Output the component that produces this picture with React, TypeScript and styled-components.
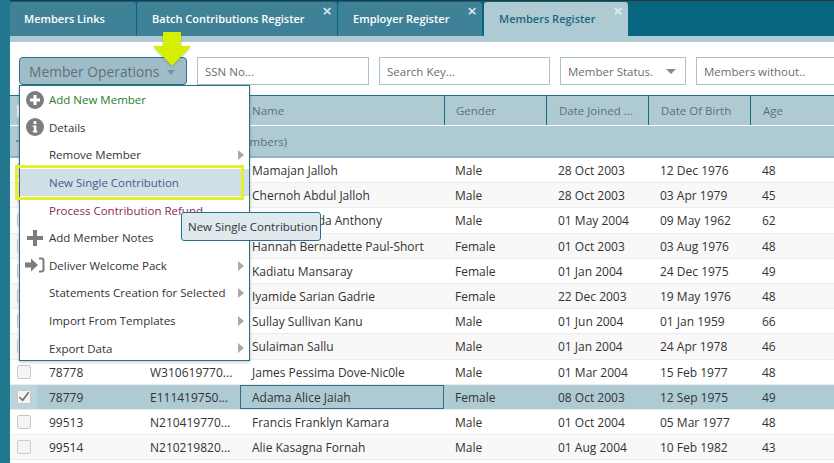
import React from "react";
import styled, { createGlobalStyle } from "styled-components";

const GlobalStyle = createGlobalStyle`
	html, body {
		margin: 0;
		padding: 0;
		background: #fff;
	}
	* {
		box-sizing: border-box;
	}
`;

const tabs = [
	{ label: "Members Links", width: 126, closable: false, active: false },
	{ label: "Batch Contributions Register", width: 200, closable: true, active: false },
	{ label: "Employer Register", width: 144, closable: true, active: false },
	{ label: "Members Register", width: 144, closable: true, active: true },
];

const columns = "27px 101px 102px 204px 102px 102px 102px 84px";

const rows = [
	{ id: "", ssn: "", name: "Mamajan Jalloh", gender: "Male", joined: "28 Oct 2003", birth: "12 Dec 1976", age: "48" },
	{ id: "", ssn: "", name: "Chernoh Abdul Jalloh", gender: "Male", joined: "28 Oct 2003", birth: "03 Apr 1979", age: "45" },
	{ id: "", ssn: "", name: "Fatmata Linda Anthony", gender: "Male", joined: "01 May 2004", birth: "09 May 1962", age: "62" },
	{ id: "", ssn: "", name: "Hannah Bernadette Paul-Short", gender: "Female", joined: "01 Oct 2003", birth: "03 Aug 1976", age: "48" },
	{ id: "", ssn: "", name: "Kadiatu Mansaray", gender: "Female", joined: "01 Jan 2004", birth: "24 Dec 1975", age: "49" },
	{ id: "", ssn: "", name: "Iyamide Sarian Gadrie", gender: "Female", joined: "22 Dec 2003", birth: "19 May 1976", age: "48" },
	{ id: "", ssn: "", name: "Sullay Sullivan Kanu", gender: "Male", joined: "01 Jun 2004", birth: "01 Jan 1959", age: "66" },
	{ id: "", ssn: "", name: "Sulaiman Sallu", gender: "Male", joined: "01 Jan 2004", birth: "24 Apr 1978", age: "46" },
	{ id: "78778", ssn: "W310619770...", name: "James Pessima Dove-Nic0le", gender: "Male", joined: "01 Mar 2004", birth: "15 Feb 1977", age: "48" },
	{ id: "78779", ssn: "E111419750...", name: "Adama Alice Jaiah", gender: "Female", joined: "08 Oct 2003", birth: "12 Sep 1975", age: "49", selected: true },
	{ id: "99513", ssn: "N210419770...", name: "Francis Franklyn Kamara", gender: "Male", joined: "01 Oct 2004", birth: "05 Mar 1977", age: "48" },
	{ id: "99514", ssn: "N210219820...", name: "Alie Kasagna Fornah", gender: "Male", joined: "01 Aug 2004", birth: "10 Feb 1982", age: "43" },
];

const PlusCircleIcon = () => (
	<svg width="18" height="18" viewBox="0 0 18 18">
		<circle cx="9" cy="9" r="9" fill="#7d7d7f" />
		<path d="M9 4v10M4 9h10" stroke="#fff" strokeWidth="3" />
	</svg>
);

const InfoIcon = () => (
	<svg width="18" height="18" viewBox="0 0 18 18">
		<circle cx="9" cy="9" r="9" fill="#7d7d7f" />
		<rect x="7.6" y="3.2" width="2.8" height="2.8" fill="#fff" />
		<path d="M6.8 7.4h3.6v5.4h1v1.6H6.8v-1.6h1v-3.8h-1z" fill="#fff" />
	</svg>
);

const PlusIcon = () => (
	<svg width="18" height="18" viewBox="0 0 18 18">
		<path d="M9 1v16M1 9h16" stroke="#7d7d7f" strokeWidth="4" />
	</svg>
);

const SignInIcon = () => (
	<svg width="20" height="16" viewBox="0 0 20 16">
		<path d="M0 5.5h6V1.5L13 8l-7 6.5v-4H0z" fill="#7d7d7f" />
		<path d="M14 1.5h2.5a2 2 0 0 1 2 2v9a2 2 0 0 1-2 2H14" fill="none" stroke="#7d7d7f" strokeWidth="2" />
	</svg>
);

const CheckIcon = () => (
	<svg width="18" height="16" viewBox="0 0 18 16">
		<path d="M2 8l5 5 9-12" fill="none" stroke="#6f6f6f" strokeWidth="2.4" />
	</svg>
);

const menuItems = [
	{ label: "Add New Member", icon: <PlusCircleIcon />, tone: "#2a7d2a" },
	{ label: "Details", icon: <InfoIcon />, tone: "#333" },
	{ label: "Remove Member", sub: true, tone: "#333" },
	{ label: "New Single Contribution", tone: "#4a5a93", hovered: true },
	{ label: "Process Contribution Refund", tone: "#8e2a4e" },
	{ label: "Add Member Notes", icon: <PlusIcon />, tone: "#333" },
	{ label: "Deliver Welcome Pack", icon: <SignInIcon />, sub: true, tone: "#333" },
	{ label: "Statements Creation for Selected", sub: true, tone: "#333" },
	{ label: "Import From Templates", sub: true, tone: "#333" },
	{ label: "Export Data", sub: true, tone: "#333" },
];

export default function App() {
	return (
		<Page>
			<GlobalStyle />
			<TabBar>
				{tabs.map((tab) => (
					<Tab key={tab.label} $width={tab.width} $active={tab.active}>
						{tab.label}
						{tab.closable && <TabClose $active={tab.active}>×</TabClose>}
					</Tab>
				))}
			</TabBar>
			<Strip />
			<Toolbar>
				<OperationsButton>
					Member Operations
					<SmallCaret />
				</OperationsButton>
				<Field $width={172}>SSN No...</Field>
				<Field $width={171}>Search Key...</Field>
				<Field $width={126}>
					Member Status.
					<DropCaret />
				</Field>
				<Field $width={160}>Members without..</Field>
			</Toolbar>
			<HeaderRow>
				<HeaderCell>
					<CheckBox />
				</HeaderCell>
				<HeaderCell />
				<HeaderCell />
				<HeaderCell>Name</HeaderCell>
				<HeaderCell>Gender</HeaderCell>
				<HeaderCell>Date Joined ...</HeaderCell>
				<HeaderCell>Date Of Birth</HeaderCell>
				<HeaderCell>Age</HeaderCell>
			</HeaderRow>
			<GroupRow>
				<GroupToggle />
				Member Status: Active (1024 Members)
			</GroupRow>
			{rows.map((row, index) => (
				<Row key={row.name} $selected={row.selected} $odd={index % 2 === 1}>
					<CheckCell $selected={row.selected}>
						<CheckBox>{row.selected && <CheckIcon />}</CheckBox>
					</CheckCell>
					<Cell>{row.id}</Cell>
					<Cell>{row.ssn}</Cell>
					<Cell $focused={row.selected}>{row.name}</Cell>
					<Cell>{row.gender}</Cell>
					<Cell>{row.joined}</Cell>
					<Cell>{row.birth}</Cell>
					<Cell>{row.age}</Cell>
				</Row>
			))}

			<Menu>
				{menuItems.map((item) => (
					<MenuItem key={item.label} $tone={item.tone} $hovered={item.hovered}>
						<MenuIcon>{item.icon}</MenuIcon>
						{item.label}
						{item.sub && <SubArrow />}
					</MenuItem>
				))}
			</Menu>
			<Tooltip>New Single Contribution</Tooltip>
			<Highlight />
			<Pointer viewBox="0 0 38 34">
				<path d="M10 0h18v14h10L19 34 0 14h10z" fill="#d6ee00" />
			</Pointer>
		</Page>
	);
}

const Page = styled.div`
	position: relative;
	width: 834px;
	height: 463px;
	overflow: hidden;
	background: #fff;
	border-left: 10px solid #22788f;
	font-family: "Open Sans", "Noto Sans", sans-serif;
	font-size: 12px;
	color: #333;
`;
const TabBar = styled.div`
	display: flex;
	gap: 1px;
	height: 36px;
	margin-left: -10px;
	padding: 1px 0 0 10px;
	background: #08657f;
	border-top: 1px solid #2b3538;
`;
const Tab = styled.div<{ $width: number; $active: boolean }>`
	position: relative;
	display: flex;
	align-items: center;
	width: ${({ $width }) => $width}px;
	padding: 0 15px 1px;
	border-radius: 3px 3px 0 0;
	background: ${({ $active }) => ($active ? "#aecbd4" : "#3f8298")};
	color: ${({ $active }) => ($active ? "#1c667f" : "#fff")};
	font-weight: 600;
	font-size: 11px;
	white-space: nowrap;
	&:first-child {
		padding-left: 14px;
	}
	&:last-child {
		margin-left: 1px;
	}
`;
const TabClose = styled.span<{ $active: boolean }>`
	position: absolute;
	top: 0;
	right: 5px;
	color: ${({ $active }) => ($active ? "#e4eef1" : "#dfeaee")};
	font-size: 17px;
	line-height: 17px;
	font-weight: 600;
`;
const Strip = styled.div`
	height: 6px;
	background: #aecbd4;
`;
const Toolbar = styled.div`
	display: flex;
	gap: 10px;
	height: 54px;
	padding: 15px 0 0 9px;
	overflow: hidden;
	border-bottom: 1px solid #22708a;
`;
const OperationsButton = styled.div`
	position: relative;
	display: flex;
	align-items: center;
	flex: none;
	width: 168px;
	height: 28px;
	padding-left: 9px;
	border: 1px solid #2a7087;
	border-radius: 4px;
	background: #9fbdc8;
	color: #5f6f76;
	font-size: 13.8px;
`;
const SmallCaret = styled.span`
	position: absolute;
	right: 11px;
	top: 12px;
	border-left: 4px solid transparent;
	border-right: 4px solid transparent;
	border-top: 5px solid #7d8f96;
`;
const Field = styled.div<{ $width: number }>`
	position: relative;
	display: flex;
	align-items: center;
	flex: none;
	width: ${({ $width }) => $width}px;
	height: 28px;
	padding-left: 7px;
	border: 1px solid #a9c3cc;
	background: #fff;
	color: #6d6d6d;
	font-size: 11.5px;
`;
const DropCaret = styled.span`
	position: absolute;
	right: 9px;
	top: 11px;
	border-left: 5px solid transparent;
	border-right: 5px solid transparent;
	border-top: 5px solid #8a8a8a;
`;
const HeaderRow = styled.div`
	display: grid;
	grid-template-columns: ${columns};
	height: 30px;
	background: #aecbd4;
	border-bottom: 1px solid #fff;
`;
const HeaderCell = styled.div`
	display: flex;
	align-items: center;
	padding-left: 12px;
	border-left: 1px solid #1f6a83;
	color: #5f6f76;
	font-size: 11.5px;
	&:nth-child(-n + 4) {
		border-left: none;
	}
	&:first-child {
		padding-left: 6px;
	}
	&:nth-child(5) {
		padding-left: 11px;
	}
`;
const GroupRow = styled.div`
	display: flex;
	align-items: center;
	height: 32px;
	padding-left: 6px;
	background: #aecbd4;
	border-bottom: 2px solid #8fb3bf;
	color: #5f6f76;
	font-size: 11.5px;
`;
const GroupToggle = styled.span`
	flex: none;
	width: 8px;
	height: 2px;
	margin-right: 53px;
	background: #7d8f96;
`;
const Row = styled.div<{ $selected?: boolean; $odd: boolean }>`
	display: grid;
	grid-template-columns: ${columns};
	height: 25.2px;
	background: ${({ $selected, $odd }) => ($selected ? "#aecbd4" : $odd ? "#f8f8f8" : "#fff")};
	border-bottom: 1px solid #ececec;
`;
const Cell = styled.div<{ $focused?: boolean }>`
	display: flex;
	align-items: center;
	padding-top: 1px;
	padding-left: ${({ $focused }) => ($focused ? "11px" : "12px")};
	white-space: nowrap;
	overflow: hidden;
	border: ${({ $focused }) => ($focused ? "1px solid #2a7087" : "none")};
	&:nth-child(5) {
		padding-left: 11px;
	}
`;
const CheckCell = styled.div<{ $selected?: boolean }>`
	display: flex;
	align-items: center;
	justify-content: center;
	background: ${({ $selected }) => ($selected ? "#bcd4dc" : "transparent")};
`;
const CheckBox = styled.div`
	position: relative;
	display: flex;
	align-items: center;
	justify-content: center;
	width: 14px;
	height: 14px;
	border: 1px solid #c8c8c8;
	border-radius: 2px;
	background: #f4f4f4;
`;
const Menu = styled.div`
	position: absolute;
	left: 9px;
	top: 85px;
	width: 231px;
	height: 276px;
	background: #fff;
	border: 1px solid #2a6f85;
	box-shadow: 0 1px 3px rgba(0, 0, 0, 0.25);
`;
const MenuItem = styled.div<{ $tone: string; $hovered?: boolean }>`
	position: relative;
	display: flex;
	align-items: center;
	height: 27.6px;
	background: ${({ $hovered }) => ($hovered ? "#d0e0e6" : "transparent")};
	color: ${({ $tone }) => $tone};
	font-size: 11.5px;
	white-space: nowrap;
`;
const MenuIcon = styled.span`
	display: flex;
	align-items: center;
	justify-content: center;
	flex: none;
	width: 29px;
	padding-left: 1px;
`;
const SubArrow = styled.span`
	position: absolute;
	right: 5px;
	top: 9px;
	border-top: 5px solid transparent;
	border-bottom: 5px solid transparent;
	border-left: 6px solid #a9a9a9;
`;
const Tooltip = styled.div`
	position: absolute;
	left: 171px;
	top: 212px;
	display: flex;
	align-items: center;
	width: 140px;
	height: 29px;
	padding-left: 6px;
	background: #dfeaee;
	border: 1px solid #2a7087;
	border-radius: 3px;
	color: #333;
	font-size: 11.5px;
	white-space: nowrap;
`;
const Highlight = styled.div`
	position: absolute;
	left: 5px;
	top: 165px;
	width: 229px;
	height: 35px;
	border: 3px solid #e4f02c;
`;
const Pointer = styled.svg`
	position: absolute;
	left: 143px;
	top: 32px;
	width: 38px;
	height: 34px;
	filter: drop-shadow(0 1px 1px rgba(60, 70, 0, 0.35));
`;
